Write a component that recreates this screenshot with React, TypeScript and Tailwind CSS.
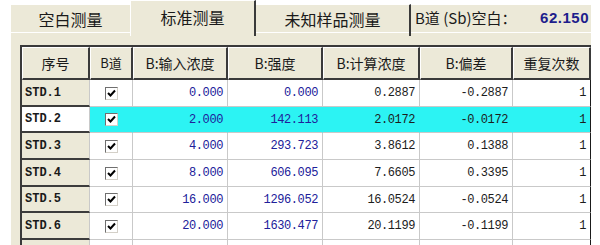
import React from 'react';

interface Row {
  name: string;
  input: string;
  strength: string;
  calc: string;
  bias: string;
  repeat: string;
}

const rows: Row[] = [
  { name: 'STD.1', input: '0.000', strength: '0.000', calc: '0.2887', bias: '-0.2887', repeat: '1' },
  { name: 'STD.2', input: '2.000', strength: '142.113', calc: '2.0172', bias: '-0.0172', repeat: '1' },
  { name: 'STD.3', input: '4.000', strength: '293.723', calc: '3.8612', bias: '0.1388', repeat: '1' },
  { name: 'STD.4', input: '8.000', strength: '606.095', calc: '7.6605', bias: '0.3395', repeat: '1' },
  { name: 'STD.5', input: '16.000', strength: '1296.052', calc: '16.0524', bias: '-0.0524', repeat: '1' },
  { name: 'STD.6', input: '20.000', strength: '1630.477', calc: '20.1199', bias: '-0.1199', repeat: '1' },
  { name: '', input: '', strength: '', calc: '', bias: '', repeat: '' },
];

const heights = ['h-[27px]', 'h-[26px]', 'h-[27px]', 'h-[27px]', 'h-[26px]', 'h-[27px]', 'h-[27px]'];

const headers = ['序号', 'B道', 'B:输入浓度', 'B:强度', 'B:计算浓度', 'B:偏差', '重复次数'];

const grid = 'grid grid-cols-[68px_43px_95px_95px_97px_93px_78px]';
const cjk = "font-['Noto_Sans_CJK_SC',sans-serif]";
const mono = "font-['Liberation_Mono',monospace]";

const CheckBox: React.FC = () => (
  <div className="w-[13px] h-[13px] bg-white border border-t-[#6f6f6f] border-l-[#6f6f6f] border-b-[#d4d0c8] border-r-[#d4d0c8] flex items-center justify-center">
    <svg width="9" height="9" viewBox="0 0 9 9">
      <path d="M1 4 L3.5 6.5 L8 1.5" stroke="#000" strokeWidth="2" fill="none" />
    </svg>
  </div>
);

const TableRow: React.FC<{ row: Row; index: number }> = ({ row, index }) => {
  const selected = index === 1;
  const bg = selected ? 'bg-[#2cf3f3]' : 'bg-white';
  const line = selected ? 'border-r-[#2cf3f3]' : 'border-r-[#c9c9c9]';
  const num = `${mono} text-[12px] tracking-[-0.4px] flex items-center justify-end pr-[4px] border-r border-b border-b-[#c9c9c9] ${bg} ${line}`;

  return (
    <div className={`${grid} ${heights[index]}`}>
      <div
        className={`${mono} text-[12px] font-bold text-[#1a1a1a] flex items-center pl-[3px] border-r border-r-[#c9c9c9] border-b-2 border-b-[#3c3c3c] ${
          selected ? 'bg-white' : 'bg-[#ece9d8]'
        }`}
      >
        {row.name}
      </div>
      <div className={`flex items-center justify-center border-r border-b border-b-[#c9c9c9] ${bg} ${line}`}>
        {row.name && <CheckBox />}
      </div>
      <div className={`${num} text-[#20209a]`}>{row.input}</div>
      <div className={`${num} text-[#20209a]`}>{row.strength}</div>
      <div className={`${num} text-[#1c1c1c]`}>{row.calc}</div>
      <div className={`${num} text-[#1c1c1c]`}>{row.bias}</div>
      <div className={`${num} text-[#1c1c1c] !border-r-[#1a1a1a]`}>{row.repeat}</div>
    </div>
  );
};

const App: React.FC = () => {
  return (
    <div className={`relative w-[600px] h-[245px] overflow-hidden bg-white ${cjk}`}>
      <div className="ml-[10px] w-[581px] flex flex-col">
        {/* tabs */}
        <div className="flex h-[36px] items-start">
          <div className="mt-[4px] w-[120px] h-[32px] bg-[#ece9d8] border-t border-l border-white">
            <div className="h-[28px] border-b border-white flex items-center justify-center text-[16px] text-[#1a1a1a]">
              空白测量
            </div>
          </div>
          <div className="w-[126px] h-[36px] bg-[#ece9d8] border-t border-l border-white border-r-2 border-r-[#3a3a3a] flex items-center justify-center pb-[4px] text-[16px] text-[#1a1a1a]">
            标准测量
          </div>
          <div className="mt-[4px] w-[155px] h-[32px] bg-[#ece9d8] border-t border-white border-r-2 border-r-[#3a3a3a]">
            <div className="h-[28px] border-b border-white flex items-center justify-center text-[16px] text-[#1a1a1a]">
              未知样品测量
            </div>
          </div>
          <div className="mt-[4px] flex-1 h-[32px] bg-[#ece9d8] border-t border-white">
            <div className="h-[28px] border-b border-white flex items-center pl-[4px] text-[15px] text-[#1a1a1a]">
              <span>B道 (Sb)空白：</span>
              <span className="font-['Liberation_Sans',sans-serif] ml-auto pr-[2px] text-[15px] tracking-[0.5px] font-bold text-[#1e1e8c]">
                62.150
              </span>
            </div>
          </div>
        </div>

        {/* panel */}
        <div className="h-[209px] bg-[#ece9d8] border-l border-white pl-[9px] pt-[9px]">
          <div className="w-[571px] border-l-2 border-l-[#3a3a3a]">
            <div className={`${grid} h-[35px] border-t-2 border-t-[#3a3a3a]`}>
              {headers.map((h, i) => (
                <div
                  key={h}
                  className={`flex items-center justify-center bg-[#ece9d8] border-t border-l border-white border-r-2 border-r-[#3a3a3a] border-b-2 border-b-[#3a3a3a] text-[#1a1a1a] ${
                    i === 1 ? 'text-[13px]' : 'text-[14px]'
                  }`}
                >
                  {h}
                </div>
              ))}
            </div>
            {rows.map((r, i) => (
              <TableRow key={i} row={r} index={i} />
            ))}
          </div>
        </div>
      </div>
    </div>
  );
};

export default App;
